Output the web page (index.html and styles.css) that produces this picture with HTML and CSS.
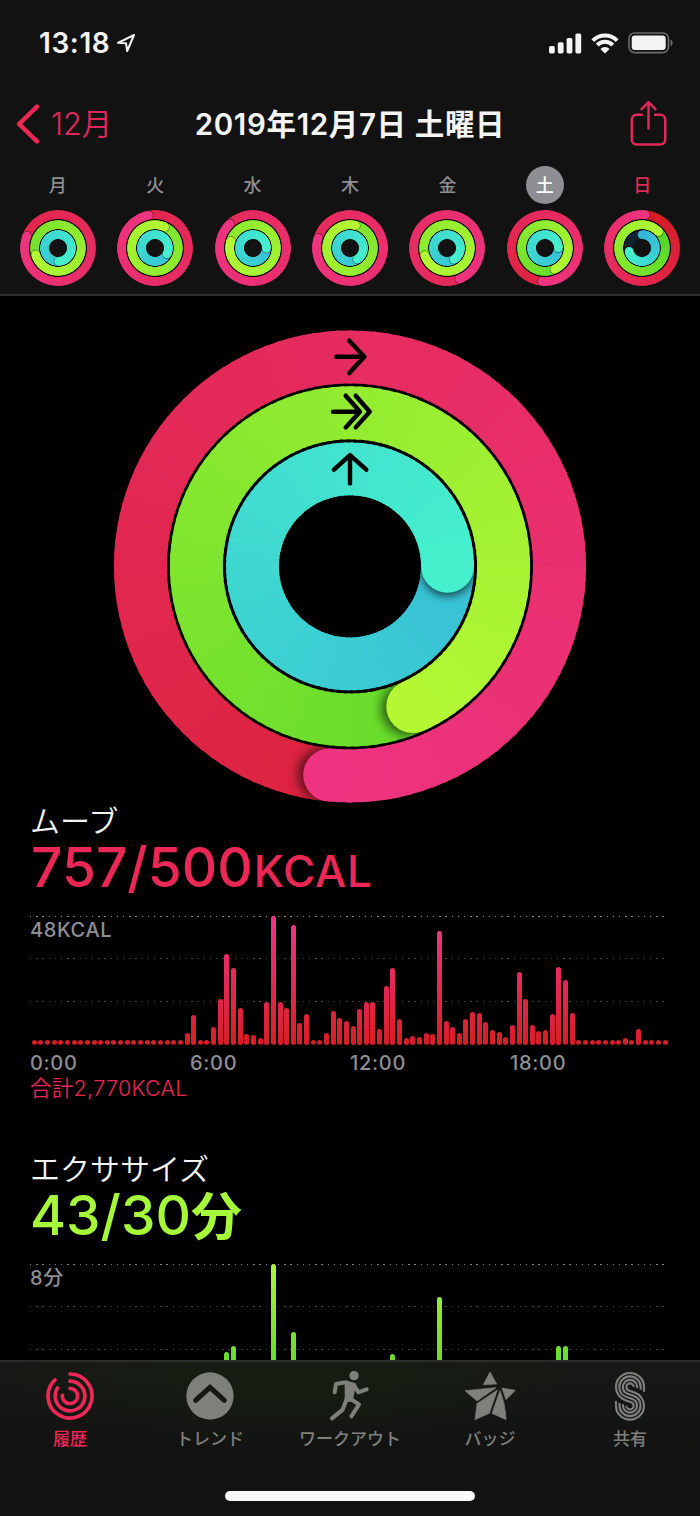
FILE: index.html
```html
<!DOCTYPE html>
<html lang="ja">
<head>
    <meta charset="UTF-8">
    <meta name="viewport" content="width=device-width, initial-scale=1.0">
    <title>アクティビティ</title>
    <link rel="stylesheet" href="styles.css">
</head>
<body>
    <div class="screen">
        <header>
            <div class="status">
                <span class="time">13:18</span>
                <svg class="location" width="20" height="20" viewBox="0 0 20 20">
                    <path d="M18 2L2 9.8L10 10.2L11.2 18Z" fill="none" stroke="#f4f4f4" stroke-width="2" stroke-linejoin="round"/>
                </svg>
                <svg class="signal" width="33" height="21" viewBox="0 0 33 21" fill="#f4f4f4">
                    <rect x="0" y="13" width="5.8" height="7.4" rx="1.6"/>
                    <rect x="8.8" y="9.2" width="5.8" height="11.2" rx="1.6"/>
                    <rect x="17.6" y="5" width="5.8" height="15.4" rx="1.6"/>
                    <rect x="26.4" y="0.4" width="5.8" height="20" rx="1.6"/>
                </svg>
                <svg class="wifi" width="28" height="21" viewBox="0 0 28 21">
                    <path d="M1.8 7.6A17.3 17.3 0 0 1 26.2 7.6M6.2 12A11 11 0 0 1 21.8 12" fill="none" stroke="#f4f4f4" stroke-width="4"/>
                    <path d="M14 20.5L9.4 15.9A6.5 6.5 0 0 1 18.6 15.9Z" fill="#f4f4f4"/>
                </svg>
                <svg class="battery" width="46" height="22" viewBox="0 0 46 22">
                    <rect x="1" y="1" width="39.5" height="19.6" rx="5.6" fill="none" stroke="#6c6c6c" stroke-width="1.6"/>
                    <rect x="3.7" y="3.6" width="34" height="14.4" rx="3.2" fill="#f4f4f4"/>
                    <path d="M42.6 7.4C45.2 8.6 45.2 13 42.6 14.2Z" fill="#6c6c6c"/>
                </svg>
            </div>

            <nav class="title-bar">
                <a class="back">
                    <svg width="24" height="40" viewBox="0 0 24 40">
                        <path d="M21 2.6L3 20L21 37.4" fill="none" stroke="#ef2757" stroke-width="4.4" stroke-linecap="round" stroke-linejoin="round"/>
                    </svg>
                    <span>12月</span>
                </a>
                <h1>2019年12月7日 土曜日</h1>
                <a class="share">
                    <svg width="37" height="46" viewBox="0 0 37 46">
                        <path d="M13 13.8H6.6A4.8 4.8 0 0 0 1.8 18.6V38.8A4.8 4.8 0 0 0 6.6 43.5H30.4A4.8 4.8 0 0 0 35.2 38.8V18.6A4.8 4.8 0 0 0 30.4 13.8H24M18.5 28.4V1.2M10.8 8.8L18.5 1.2L26.2 8.8" fill="none" stroke="#e0295a" stroke-width="2.5" stroke-linejoin="round"/>
                    </svg>
                </a>
            </nav>

            <div class="week" id="week"></div>
        </header>

        <main>
            <svg class="rings" id="rings" width="474" height="474" viewBox="-237 -237.4 474 474"></svg>

            <section class="move">
                <h2>ムーブ</h2>
                <p class="value">757/500<small>KCAL</small></p>
                <div class="chart">
                    <span class="max">48KCAL</span>
                    <div class="lines"><i></i><i></i><i></i></div>
                    <div class="bars" id="move-bars"></div>
                </div>
                <div class="hours"><span>0:00</span><span>6:00</span><span>12:00</span><span>18:00</span></div>
                <p class="total">合計2,770KCAL</p>
            </section>

            <section class="exercise">
                <h2>エクササイズ</h2>
                <p class="value">43/30<b>分</b></p>
                <div class="chart">
                    <span class="max">8分</span>
                    <div class="lines"><i></i><i></i><i></i></div>
                    <div class="bars" id="exercise-bars"></div>
                </div>
            </section>
        </main>

        <footer>
            <div class="tabs">
                <a class="tab active">
                    <svg width="48" height="50" viewBox="0 0 144 150">
                        <g fill="none" stroke="currentColor" stroke-width="11" stroke-linecap="round">
                            <path d="M72 9A66 66 0 1 1 27 26.7"/>
                            <path d="M72 30.5A44.5 44.5 0 1 1 34.5 51"/>
                            <path d="M72 52A23 23 0 1 1 49 73"/>
                        </g>
                    </svg>
                    <span>履歴</span>
                </a>
                <a class="tab">
                    <svg width="48" height="50" viewBox="0 0 144 150">
                        <circle cx="72" cy="75" r="71" fill="currentColor"/>
                        <path d="M29 88L72 49L115 88" fill="none" stroke="#141712" stroke-width="15" stroke-linecap="round"/>
                    </svg>
                    <span>トレンド</span>
                </a>
                <a class="tab">
                    <svg width="40" height="50" viewBox="0 0 120 150">
                        <g fill="none" stroke="currentColor" stroke-width="12" stroke-linecap="round" stroke-linejoin="round">
                            <path d="M14 64L18 39L48 34L72 42"/>
                            <path d="M72 42L85 64L110 55"/>
                            <path d="M50 84L38 116L6 142"/>
                            <path d="M62 84L87 100L64 136"/>
                        </g>
                        <path d="M44 30L78 38L68 92L44 92Z" fill="currentColor"/>
                        <circle cx="72" cy="14" r="14" fill="currentColor"/>
                    </svg>
                    <span>ワークアウト</span>
                </a>
                <a class="tab">
                    <svg width="52" height="50" viewBox="340 66 156 150" fill="currentColor" stroke="currentColor" stroke-width="2" stroke-linejoin="round">
                        <path d="M418 69L438 105L398 107Z"/>
                        <path d="M343 125L436 116L379 156Z"/>
                        <path d="M454 117L494 124L466 152Z"/>
                        <path d="M440 123L416 193L373 212L379 164Z"/>
                        <path d="M448 125C458 150 465 180 466 212L424 193Z"/>
                    </svg>
                    <span>バッジ</span>
                </a>
                <a class="tab">
                    <svg width="32" height="50" viewBox="0 0 96 150">
                        <g fill="none" stroke="currentColor" stroke-width="6.4">
                            <path d="M90 62V48A42 42 0 0 0 6 48A42 42 0 0 0 34.3 87.7L51.6 93.6A11 11 0 0 1 59 104A11 11 0 0 1 37 104"/>
                            <path d="M80 56V48A32 32 0 0 0 16 48A32 32 0 0 0 37.6 78.3L54.8 84.1A21 21 0 0 1 69 104A21 21 0 0 1 27 104V100"/>
                            <path d="M69.5 52V48A21.5 21.5 0 0 0 26.5 48A21.5 21.5 0 0 0 41 68.3L58.2 74.2A31.5 31.5 0 0 1 79.5 104A31.5 31.5 0 0 1 16.5 104V96"/>
                            <path d="M59 48A11 11 0 0 0 37 48A11 11 0 0 0 44.4 58.4L61.7 64.3A42 42 0 0 1 90 104A42 42 0 0 1 6 104V90"/>
                        </g>
                    </svg>
                    <span>共有</span>
                </a>
            </div>
            <div class="home-indicator"></div>
        </footer>
    </div>
    <script src="script.js"></script>
</body>
</html>
```
FILE: styles.css
```css
* {
    box-sizing: border-box;
}
body {
    margin: 0;
    background-color: #000;
    color: #fff;
    font-family: Inter, "Noto Sans CJK JP", sans-serif;
}
h1, h2, p {
    margin: 0;
    white-space: nowrap;
}
svg {
    display: block;
    flex: none;
}
.screen {
    position: relative;
    width: 700px;
    height: 1516px;
    overflow: hidden;
}

/* Cabecera */
header {
    height: 296px;
    background-color: #121212;
    border-bottom: 2px solid #303030;
}
.status {
    display: flex;
    align-items: center;
    height: 86px;
    padding: 0 26px 0 39px;
}
.time {
    width: 72px;
    font-size: 28px;
    font-weight: 600;
    letter-spacing: 0.6px;
    color: #f4f4f4;
}
.location {
    margin-left: 5px;
}
.signal {
    margin-left: auto;
}
.wifi {
    margin-left: 9px;
}
.battery {
    margin-left: 9px;
}
.title-bar {
    display: grid;
    grid-template-columns: 150px 1fr 150px;
    align-items: center;
    height: 76px;
    padding: 0 33px 0 16px;
}
.back {
    display: flex;
    align-items: center;
    gap: 11px;
    color: #e0295a;
    font-size: 30.5px;
    font-weight: 350;
    line-height: 40px;
}
.title-bar h1 {
    justify-self: center;
    padding-left: 17px;
    font-size: 29.5px;
    font-weight: 600;
    line-height: 40px;
    letter-spacing: 0.65px;
    color: #f4f4f4;
}
.share {
    justify-self: end;
}
.week {
    display: grid;
    grid-template-columns: repeat(7, 1fr);
    padding: 4px 9px 0;
}
.day {
    display: flex;
    flex-direction: column;
    align-items: center;
    gap: 6px;
}
.day span {
    width: 38px;
    height: 38px;
    border-radius: 50%;
    font-size: 18px;
    font-weight: 500;
    line-height: 39px;
    text-align: center;
    color: #8e8e93;
}
.day.selected span {
    background-color: #8e8e93;
    color: #fff;
}
.day.sunday span {
    color: #e0295a;
}

/* Contenido */
.rings {
    margin: 33px auto 0;
}
section {
    padding: 0 30px;
}
h2 {
    height: 32px;
    font-size: 30px;
    font-weight: 350;
    line-height: 32px;
    color: #f4f4f4;
}
.value {
    height: 60px;
    padding-left: 1px;
    font-size: 55px;
    font-weight: 500;
    line-height: 60px;
}
.value small {
    padding-left: 1px;
    font-size: 44px;
    letter-spacing: 0.7px;
}
.value b {
    font-weight: 700;
    font-size: 51px;
}
.move {
    margin-top: 2px;
}
.move .value, .total {
    color: #ea2855;
}
.exercise {
    margin-top: 48px;
}
.exercise .value {
    padding-left: 0;
    color: #a6f83a;
}
.chart {
    display: grid;
    height: 129px;
    margin-top: 19px;
}
.chart > * {
    grid-area: 1 / 1;
}
.max {
    font-size: 20px;
    font-weight: 500;
    line-height: 29px;
    letter-spacing: 0.6px;
    color: #8e8e93;
}
.lines {
    display: flex;
    flex-direction: column;
    gap: 41.3px;
    width: 638px;
}
.lines i {
    height: 1px;
    background: repeating-linear-gradient(90deg, #464646 0 1.4px, transparent 1.4px 6.2px);
}
.lines i:first-child {
    background: repeating-linear-gradient(90deg, #858585 0 1.4px, transparent 1.4px 6.2px);
}
.bars {
    display: flex;
    align-items: flex-end;
    justify-content: space-between;
    padding: 0 1.6px 0 1.8px;
}
.bars div {
    width: 5px;
    border-radius: 2.5px;
    background: linear-gradient(#f0368a, #d61e26) bottom / 100% 129px no-repeat;
}
.exercise .bars div {
    background-image: linear-gradient(#aef436, #4fd431);
}
.hours {
    display: grid;
    grid-template-columns: repeat(4, 160px);
    height: 35px;
    font-size: 20px;
    font-weight: 500;
    line-height: 36px;
    letter-spacing: 0.7px;
    color: #8e8e93;
}
.total {
    height: 25px;
    font-size: 21.5px;
    font-weight: 350;
    line-height: 17px;
    letter-spacing: 0.3px;
}

/* Barra inferior */
footer {
    position: absolute;
    left: 0;
    bottom: 0;
    width: 100%;
    height: 156px;
    background: radial-gradient(ellipse 300px 70px at 290px 14px, #151e11, transparent), linear-gradient(#161914, #121212 65%);
    border-top: 2px solid #2b2d2a;
}
.tabs {
    display: grid;
    grid-template-columns: repeat(5, 1fr);
    padding-top: 9px;
}
.tab {
    display: flex;
    flex-direction: column;
    align-items: center;
    color: #7d807b;
}
.tab span {
    font-size: 17px;
    font-weight: 500;
    line-height: 36px;
}
.tab.active {
    color: #ef2757;
}
.home-indicator {
    width: 250px;
    height: 10px;
    margin: 34px auto 0;
    border-radius: 5px;
    background-color: #f8f8f8;
}
```
FILE: script.js
```javascript
// Colores de inicio y fin de cada anillo
const colores = [
    [[213, 27, 32], [238, 52, 128]],
    [[69, 208, 40], [180, 248, 52]],
    [[52, 180, 216], [70, 240, 204]]
];

const dias = [
    { nombre: '月', progreso: [1.81, 1.705, 1.495] },
    { nombre: '火', progreso: [1.97, 2.07, 1.325] },
    { nombre: '水', progreso: [2.88, 2.8, 1.255] },
    { nombre: '木', progreso: [2.8, 2.04, 1.41] },
    { nombre: '金', progreso: [2.44, 2.7, 1.415] },
    { nombre: '土', progreso: [1.514, 1.433, 1.25], clase: 'selected' },
    { nombre: '日', progreso: [1.017, 1.128, 0.71], clase: 'sunday' }
];

let contador = 0;

function mezclar(par, t) {
    return 'rgb(' + par[0].map((c, i) => Math.round(c + (par[1][i] - c) * t)).join(',') + ')';
}

function punto(r, grados) {
    const a = (grados - 90) * Math.PI / 180;
    return (r * Math.cos(a)).toFixed(3) + ' ' + (r * Math.sin(a)).toFixed(3);
}

function circulo(r, grados, radio, extra) {
    const p = punto(r, grados).split(' ');
    return `<circle cx="${p[0]}" cy="${p[1]}" r="${radio}" ${extra}/>`;
}

// Dibuja un anillo con degradado por segmentos y una punta con sombra
function anillo(r, ancho, progreso, par, sombra) {
    const fin = progreso * 360;
    const inicio = Math.max(0, fin - 360);
    const paso = 3;
    const solape = 120 / r + 0.5; // evita las costuras entre segmentos
    const id = 'anillo' + (contador++);
    const segmentos = [];
    for (let g = inicio; g < fin; g += paso) {
        const hasta = Math.min(g + paso + solape, fin);
        segmentos.push(`<path d="M${punto(r, g)}A${r} ${r} 0 0 1 ${punto(r, hasta)}" fill="none" stroke="${mezclar(par, g / fin)}" stroke-width="${ancho}"/>`);
    }
    const mitad = Math.floor(segmentos.length / 2);
    let html = '';
    if (progreso < 1) {
        html += `<circle r="${r}" fill="none" stroke="#10222c" stroke-width="${ancho}"/>`;
        html += circulo(r, 0, ancho / 2, `fill="${mezclar(par, 0)}"`);
    }
    html += segmentos.slice(0, mitad).join('');
    html += `<mask id="${id}" maskUnits="userSpaceOnUse" x="-240" y="-240" width="480" height="480"><circle r="${r}" fill="none" stroke="#fff" stroke-width="${ancho}"/></mask>`;
    html += `<filter id="${id}f" x="-100%" y="-100%" width="300%" height="300%"><feGaussianBlur stdDeviation="${sombra}"/></filter>`;
    html += `<g mask="url(#${id})">` + circulo(r, fin + sombra * 45 / r, ancho / 2, `fill="#000" opacity="0.65" filter="url(#${id}f)"`) + '</g>';
    html += segmentos.slice(mitad).join('');
    html += circulo(r, fin, ancho / 2, `fill="${mezclar(par, 1)}"`);
    return html;
}

document.getElementById('week').innerHTML = dias.map(dia => `
    <div class="day ${dia.clase || ''}">
        <span>${dia.nombre}</span>
        <svg width="76" height="76" viewBox="-38 -38 76 76">
            <circle r="35" fill="#050505"/>
            ${[33.4, 23.3, 13.3].map((r, i) => anillo(r, 8.5, dia.progreso[i], colores[i], 0.6)).join('')}
            <circle r="9" fill="#121212"/>
        </svg>
    </div>`).join('');

document.getElementById('rings').innerHTML =
    anillo(209.5, 53, 1.5155, colores[0], 6) +
    anillo(153.6, 53, 1.433, colores[1], 6) +
    anillo(97.5, 52.8, 1.25, colores[2], 4) +
    `<g fill="none" stroke="#000" stroke-width="4.4" stroke-linecap="round" stroke-linejoin="round">
        <path d="M-13.7 -209.7H14.3M-0.7 -225.7L14.3 -209.7L-0.7 -193.3"/>
        <path d="M-17 -154.7H9M-4.3 -170.7L10 -154.7L-4.3 -139M5.7 -170.7L19.7 -154.7L5.7 -139"/>
        <path d="M0 -83V-111.3M-16 -96.7L0 -111.3L16.3 -96.7"/>
    </g>`;

// Una barra por cada 15 minutos (alto en px)
const movimiento = new Array(23).fill(4.7).concat([
    12, 30.3, 4.7, 4.7, 18.3, 46, 91.3, 77, 37.3, 10.7, 10, 6.7, 43.3, 128.7, 43.3, 37.3, 120.3, 21.7, 31.3,
    4.7, 4.7, 12.3, 34.3, 26.7, 24.3, 19.3, 36.3, 43.3, 43.3, 15.7, 59, 77.3, 26, 7.3, 9.3, 7.7, 11.7, 11.3,
    114.3, 24.3, 17.7, 12.3, 26, 33.3, 32, 22.7, 14.7, 13.3, 8.3, 20, 72.7, 46.3, 20.3, 13.7, 14.7, 31, 78,
    64.7, 32.3, 4.7, 4.7, 4.7, 4.7, 4.7, 4.7, 4.7, 6.7, 4.7, 16.3, 4.7, 4.7, 4.7, 4.7
]);

const ejercicio = new Array(96).fill(4.7);
Object.assign(ejercicio, { 29: 40.7, 30: 47, 36: 128.7, 39: 61, 54: 38.7, 61: 96, 79: 47, 80: 47 });

function barras(id, datos) {
    document.getElementById(id).innerHTML = datos.map(alto => `<div style="height:${alto}px"></div>`).join('');
}

barras('move-bars', movimiento);
barras('exercise-bars', ejercicio);
```
